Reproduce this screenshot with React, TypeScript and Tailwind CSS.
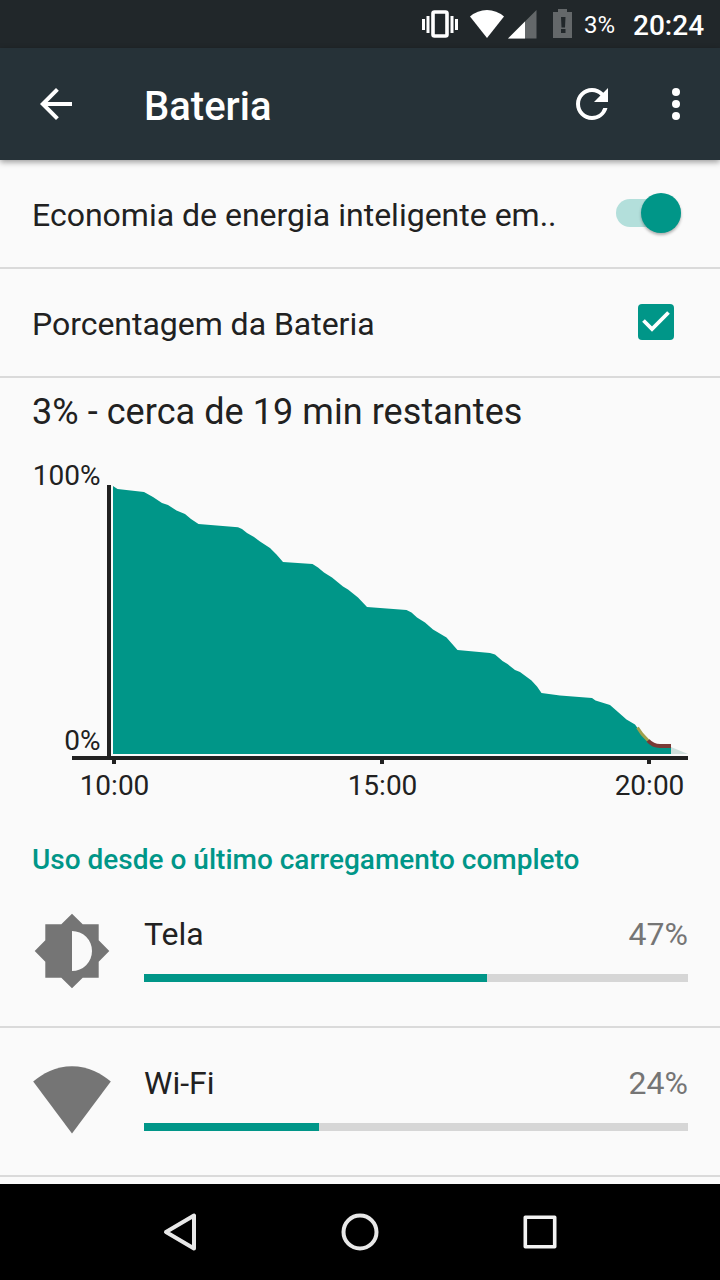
import { useState } from 'react';

type Usage = {
  name: string;
  percent: number;
  barWidth: number;
  icon: 'display' | 'wifi';
};

const usages: Usage[] = [
  { name: 'Tela', percent: 47, barWidth: 343, icon: 'display' },
  { name: 'Wi-Fi', percent: 24, barWidth: 175, icon: 'wifi' },
];

const levels = [
  [113, 486], [117.5, 489], [144, 492], [153, 497], [162, 503], [168, 505], [176.5, 510.5],
  [185, 514], [191, 519], [198.5, 524], [238, 527.2], [242, 529], [247, 533], [254, 537],
  [260, 541.5], [270, 548], [276.5, 554.5], [283, 562], [312.5, 564], [318, 567.5],
  [324, 572.5], [332, 577.5], [343, 586.5], [348, 589.5], [358, 597.5], [367, 607],
  [406.5, 610], [411.5, 612.5], [417, 617.5], [425, 622.5], [433, 629.5], [446.5, 637.5],
  [457.5, 650], [490, 653], [495, 654.5], [502.5, 661], [507.5, 664], [515, 670],
  [520, 672], [531.5, 680.5], [537, 686.5], [541.5, 693], [560, 695.5], [592, 698],
  [595.5, 700.5], [610, 705], [618, 712], [626.5, 719.5], [635, 724.5], [639, 730],
  [648, 740], [654, 744], [660, 745], [671, 745],
];

const ticks = [
  { x: 114, label: '10:00' },
  { x: 382, label: '15:00' },
  { x: 649, label: '20:00' },
];

function StatusBar() {
  return (
    <div className="flex h-12 shrink-0 items-center bg-[#21272a] text-white">
      <svg className="h-12 w-[160px] ml-[420px] shrink-0" viewBox="420 0 160 48">
        <path fill="#fff" d="M422 19h3v11h-3zM426.500 16h3v17h-3zM450.500 16h3v17h-3zM455 19h3v11h-3z" />
        <rect x="433" y="12" width="14" height="24" rx="1.500" fill="none" stroke="#fff" strokeWidth="3.600" />
        <path fill="#fff" d="M487 38 470 16.500Q477.500 10 487 10T504 16.500Z" />
        <path fill="#64686a" d="M536.500 10v28.500H508z" />
        <path fill="#fff" d="M525 21.500v17h-17z" />
        <path fill="#64686a" d="M558 9h9v3h5v26h-19V12h5z" />
        <path fill="#21272a" d="M561 17h4.500l-.5 10.500h-3.500zM561 29h4.500v4h-4.500z" />
      </svg>
      <span className="w-[53px] pl-1 pt-[2px] text-[24px] leading-none whitespace-nowrap">3%</span>
      <span className="pt-[3px] text-[28px] font-medium leading-none whitespace-nowrap">20:24</span>
    </div>
  );
}

function AppBar() {
  return (
    <header className="relative z-10 flex h-28 shrink-0 items-center bg-[#263238] pl-8 text-white shadow-[0_2px_6px_rgba(0,0,0,0.4)]">
      <button aria-label="Voltar">
        <svg className="h-12 w-12" viewBox="0 0 24 24" fill="currentColor">
          <path d="M20 11H7.830l5.590-5.590L12 4l-8 8 8 8 1.410-1.410L7.830 13H20v-2z" />
        </svg>
      </button>
      <h1 className="ml-16 flex-1 pt-1.5 text-[40px] font-medium leading-none">Bateria</h1>
      <button aria-label="Atualizar">
        <svg className="h-12 w-12" viewBox="0 0 24 24" fill="currentColor">
          <path d="M17.650 6.350A7.958 7.958 0 0 0 12 4c-4.420 0-7.990 3.580-7.990 8s3.570 8 7.990 8c3.730 0 6.840-2.550 7.730-6h-2.080A5.990 5.990 0 0 1 12 18c-3.310 0-6-2.690-6-6s2.690-6 6-6c1.660 0 3.140.69 4.220 1.780L13 11h7V4l-2.350 2.350z" />
        </svg>
      </button>
      <button aria-label="Mais opções" className="ml-9 mr-5">
        <svg className="h-12 w-12" viewBox="0 0 24 24" fill="currentColor">
          <circle cx="12" cy="6" r="2" />
          <circle cx="12" cy="12" r="2" />
          <circle cx="12" cy="18" r="2" />
        </svg>
      </button>
    </header>
  );
}

function BatteryChart() {
  const points = levels.map((p) => p.join(',')).join(' ');

  return (
    <svg className="block h-[380px] w-full" viewBox="0 450 720 380" fontSize="28">
      <path fill="#cfdfdc" d="M671 747 688 754H671z" />
      <polygon fill="#009688" points={`113,754 ${points} 671,754`} />
      <path fill="none" stroke="#a0a04c" strokeWidth="3" d="M637.500 727.500 642 734 649 741.500" />
      <path fill="none" stroke="#793a36" strokeWidth="4" d="M648 740.500C652 745 656 746 660 746H671" />
      <path fill="#212121" d="M107 485h4v271h-4zM72 756h616v4H72z" />
      <g fill="#212121">
        <text x="100.500" y="485" textAnchor="end">100%</text>
        <text x="100.500" y="750" textAnchor="end">0%</text>
        {ticks.map((tick) => (
          <g key={tick.label}>
            <rect x={tick.x - 2} y="760" width="4" height="4" />
            <text x={tick.x + 0.5} y="795" textAnchor="middle">{tick.label}</text>
          </g>
        ))}
      </g>
    </svg>
  );
}

function UsageIcon({ icon }: { icon: Usage['icon'] }) {
  return (
    <svg className="h-20 w-20 shrink-0" viewBox="0 0 80 80" fill="#757575">
      {icon === 'display' ? (
        <path
          fillRule="evenodd"
          d="M66.700 29.300V13.300H50.700L40 2.700 29.300 13.300H13.300V29.300L2.700 40 13.300 50.700V66.700H29.300L40 77.300 50.700 66.700H66.700V50.700L77.300 40ZM40 60V20a20 20 0 0 1 0 40Z"
        />
      ) : (
        <path d="M40 73.500 1.200 21.500C10 14 24 6.300 40 6.300S70 14 78.800 21.500Z" />
      )}
    </svg>
  );
}

function UsageRow({ usage }: { usage: Usage }) {
  return (
    <div className="flex h-[149px] items-start border-b-2 border-[#dadada] px-8 pt-8">
      <UsageIcon icon={usage.icon} />
      <div className="ml-8 flex-1 pt-[3px]">
        <div className="flex justify-between text-[32px] leading-10">
          <span className="text-[#212121]">{usage.name}</span>
          <span className="text-[#757575]">{usage.percent}%</span>
        </div>
        <div className="mt-5 h-2 bg-[#d6d6d6]">
          <div className="h-full bg-[#009688]" style={{ width: usage.barWidth }} />
        </div>
      </div>
    </div>
  );
}

function NavBar() {
  return (
    <nav className="flex h-24 shrink-0 items-center justify-center gap-[132px] bg-black">
      <svg className="h-12 w-12" viewBox="0 0 48 48" fill="none" stroke="#e8e8e8" strokeWidth="4" strokeLinejoin="round">
        <path d="M38 7.500V40.500L10 24Z" />
      </svg>
      <svg className="h-12 w-12" viewBox="0 0 48 48" fill="none" stroke="#e8e8e8" strokeWidth="4">
        <circle cx="24" cy="24" r="16.500" />
      </svg>
      <svg className="h-12 w-12" viewBox="0 0 48 48" fill="none" stroke="#f2f2f2" strokeWidth="3.600" strokeLinejoin="round">
        <rect x="9.300" y="9.300" width="29.400" height="29.400" />
      </svg>
    </nav>
  );
}

export default function App() {
  const [saver, setSaver] = useState(true);
  const [showPercent, setShowPercent] = useState(true);

  return (
    <div className="flex h-[1280px] w-[720px] flex-col overflow-hidden bg-[#fafafa] font-['Roboto',sans-serif] text-[#212121]">
      <StatusBar />
      <AppBar />
      <main className="min-h-0 flex-1 overflow-hidden">
        <div className="flex h-[109px] items-center justify-between border-b-2 border-[#dadada] pb-px pl-8 pr-[39px]">
          <span className="pt-[3px] text-[32px] leading-10">Economia de energia inteligente em..</span>
          <button
            onClick={() => setSaver(!saver)}
            aria-label="Economia de energia"
            className={`flex h-7 w-[65px] items-center rounded-full ${saver ? 'justify-end bg-[#b3dfdb]' : 'justify-start bg-gray-300'}`}
          >
            <span className={`h-10 w-10 rounded-full shadow-[0_2px_3px_rgba(0,0,0,0.3)] ${saver ? 'bg-[#009688]' : 'bg-gray-100'}`} />
          </button>
        </div>
        <div className="flex h-[109px] items-center justify-between border-b-2 border-[#dadada] pb-px pl-8 pr-[46px]">
          <span className="pt-[3px] text-[32px] leading-10 tracking-[-0.03px]">Porcentagem da Bateria</span>
          <button
            onClick={() => setShowPercent(!showPercent)}
            aria-label="Porcentagem da Bateria"
            className={`h-9 w-9 rounded ${showPercent ? 'bg-[#009688]' : 'bg-gray-300'}`}
          >
            {showPercent && (
              <svg className="h-9 w-9" viewBox="0 0 36 36" fill="none" stroke="#fff" strokeWidth="3.800">
                <path d="M5.500 16.500 14 25 30.500 8.500" />
              </svg>
            )}
          </button>
        </div>
        <p className="h-[72px] px-8 pt-[10px] text-[36px] leading-[48px] tracking-[0.06px]">3% - cerca de 19 min restantes</p>
        <BatteryChart />
        <h2 className="h-[49px] px-8 pt-[14px] text-[28px] font-medium leading-8 text-[#009688]">
          Uso desde o último carregamento completo
        </h2>
        {usages.map((usage) => (
          <UsageRow key={usage.name} usage={usage} />
        ))}
      </main>
      <NavBar />
    </div>
  );
}
